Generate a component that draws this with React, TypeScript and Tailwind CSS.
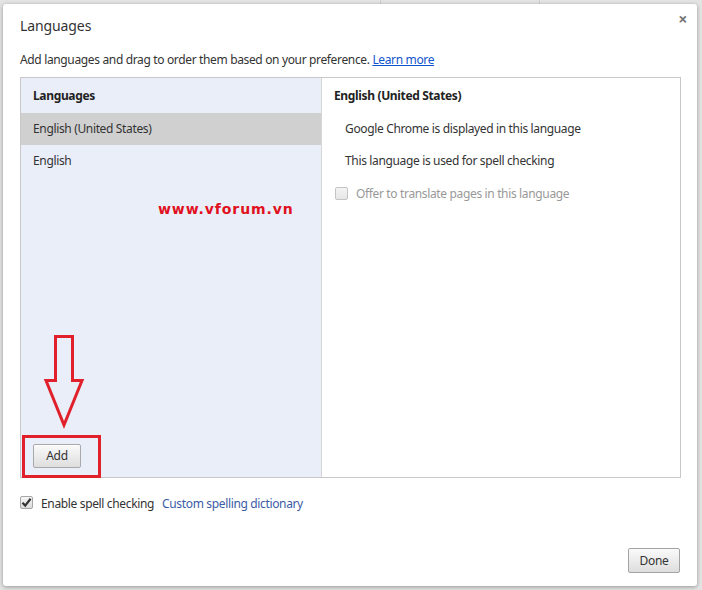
import React from "react";

const font = { fontFamily: '"Noto Sans", "Open Sans", sans-serif' };

export default function App() {
  return (
    <div
      className="relative w-[702px] h-[590px] bg-[#e4e4e4] overflow-hidden pl-[3px] pt-[4px] text-[#333] tracking-[-0.35px]"
      style={font}
    >
      {/* faint background page lines */}
      <div className="absolute left-[380px] top-0 h-[4px] w-px bg-[#cfcfcf]" />
      <div className="absolute left-[539px] top-0 h-[4px] w-px bg-[#cfcfcf]" />

      <div className="relative w-[694px] h-[582px] bg-white rounded-[3px] shadow-[0_1px_4px_rgba(0,0,0,0.35)] flex flex-col pl-[17px]">
        {/* header */}
        <div className="h-[44px] pt-[12px] flex items-start justify-between pr-[10px]">
          <div className="text-[14px] leading-[20px] text-[#333] tracking-[-0.1px]">Languages</div>
          <div className="mt-[-7px] text-[16px] font-bold text-[#777] leading-[20px]">×</div>
        </div>

        {/* description */}
        <div className="h-[29px] pt-[3px] text-[12px] leading-[18px] text-[#333]">
          Add languages and drag to order them based on your preference.{" "}
          <span className="text-[#15c] underline">Learn more</span>
        </div>

        {/* main box */}
        <div className="w-[661px] h-[401px] border border-[#c8c8c8] flex">
          <div className="w-[301px] h-full bg-[#eaeef9] border-r border-[#d6d6d6] flex flex-col text-[12px]">
            <div className="h-[35px] pl-[12px] flex items-center font-bold text-[#222]">Languages</div>
            <div className="h-[32px] pl-[12px] flex items-center bg-[#d0d0d0] text-[#333]">
              English (United States)
            </div>
            <div className="h-[32px] pl-[12px] flex items-center text-[#333]">English</div>
            <div className="flex-1" />
            <div className="h-[33px] pl-[12px] pb-[10px] flex items-start">
              <button className="w-[48px] h-[24px] rounded-[2px] border border-[#a9a9a9] bg-gradient-to-b from-[#fafafa] to-[#dedede] text-[12px] text-[#333] shadow-[0_1px_0_rgba(255,255,255,0.8)_inset]">
                Add
              </button>
            </div>
          </div>
          <div className="flex-1 flex flex-col text-[12px]">
            <div className="h-[35px] pl-[12px] flex items-center font-bold text-[#222]">
              English (United States)
            </div>
            <div className="h-[32px] pl-[23px] flex items-center text-[#333]">
              Google Chrome is displayed in this language
            </div>
            <div className="h-[32px] pl-[23px] flex items-center text-[#333]">
              This language is used for spell checking
            </div>
            <div className="h-[33px] pl-[13px] flex items-center text-[#999]">
              <span className="w-[13px] h-[13px] border border-[#c4c4c4] rounded-[2px] bg-gradient-to-b from-[#f4f4f4] to-[#e6e6e6] mr-[8px]" />
              Offer to translate pages in this language
            </div>
          </div>
        </div>

        {/* spell checking row */}
        <div className="h-[50px] pt-[18px] flex items-start text-[12px]">
          <span className="w-[13px] h-[13px] mt-[0px] border border-[#a6a6a6] rounded-[2px] bg-gradient-to-b from-[#f6f6f6] to-[#dcdcdc] flex items-center justify-center mr-[8px]">
            <svg width="11" height="11" viewBox="0 0 11 11">
              <path d="M1.5 5.8 L4.2 8.6 L9.6 1.8" stroke="#333" strokeWidth="2.2" fill="none" />
            </svg>
          </span>
          <span className="leading-[15px] text-[#333]">Enable spell checking</span>
          <span className="leading-[15px] text-[#3b5ba5] ml-[8px]">Custom spelling dictionary</span>
        </div>

        <div className="flex-1 flex items-end justify-end pr-[17px] pb-[13px]">
          <button className="w-[52px] h-[25px] rounded-[2px] border border-[#a3a3a3] bg-gradient-to-b from-[#fafafa] to-[#dedede] text-[12px] text-[#333]">
            Done
          </button>
        </div>
      </div>

      {/* watermark */}
      <div
        className="absolute left-[158px] top-[199px] text-[14px] leading-[20px] font-bold text-[#e01020] tracking-[0.9px]"
        style={{ fontFamily: '"DejaVu Sans", sans-serif' }}
      >
        www.vforum.vn
      </div>

      {/* red annotation box */}
      <div className="absolute left-[22px] top-[435px] w-[79px] h-[43px] border-[3px] border-[#e0202a]" />
      {/* red arrow */}
      <svg className="absolute left-0 top-0" width="702" height="590" viewBox="0 0 702 590">
        <polygon
          points="55.5,336.5 72.5,336.5 72.5,380.5 82,380.5 64,425 46,380.5 55.5,380.5"
          fill="none"
          stroke="#e0202a"
          strokeWidth="3"
          strokeLinejoin="miter"
        />
      </svg>
    </div>
  );
}
